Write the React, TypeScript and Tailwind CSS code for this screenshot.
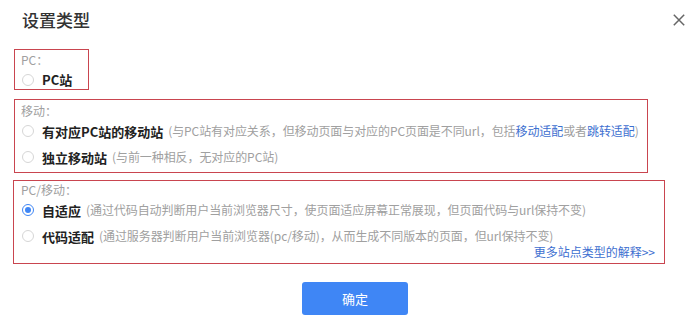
import React from "react";

function Radio({ checked = false }: { checked?: boolean }) {
  return (
    <span
      className={
        checked
          ? "ml-[1px] mr-[8px] flex h-[12px] w-[12px] shrink-0 items-center justify-center rounded-full border border-[#3f86f5] bg-white"
          : "ml-[1px] mr-[8px] flex h-[12px] w-[12px] shrink-0 items-center justify-center rounded-full border border-[#d6d6d6] bg-white"
      }
    >
      {checked && <span className="h-[6px] w-[6px] rounded-full bg-[#3f86f5]" />}
    </span>
  );
}

function Option({
  title,
  desc,
  checked,
  className,
}: {
  title: string;
  desc?: React.ReactNode;
  checked?: boolean;
  className: string;
}) {
  return (
    <div className={"flex items-center whitespace-nowrap " + className}>
      <Radio checked={checked} />
      <span className="text-[13px] font-bold leading-none text-[#222]">{title}</span>
      {desc && (
        <span className="ml-[5px] text-[12px] leading-none tracking-[-0.08px] text-[#a0a0a0]">{desc}</span>
      )}
    </div>
  );
}

export default function App() {
  return (
    <div className="h-[327px] w-[696px] overflow-hidden bg-white font-['Microsoft_YaHei','Noto_Sans_CJK_SC',sans-serif]">
      {/* header */}
      <div className="flex h-[39px] items-center justify-between pl-[22px] pr-[11px]">
        <div className="text-[17px] font-medium leading-none text-[#333]">设置类型</div>
        <svg width="12" height="12" viewBox="0 0 12 12" className="text-[#666]">
          <path d="M0.8 0.8 L11.2 11.2 M11.2 0.8 L0.8 11.2" stroke="currentColor" strokeWidth="1.5" />
        </svg>
      </div>

      {/* PC */}
      <div className="ml-[14px] mt-[10px] w-[75px] border border-[#c9454f] pl-[6px]">
        <div className="h-[20px] text-[12px] leading-[20px] text-[#a0a0a0]">PC：</div>
        <Option title="PC站" className="h-[19px]" />
      </div>

      {/* 移动 */}
      <div className="ml-[14px] mt-[9px] w-[634px] border border-[#c9454f] pb-[4px] pl-[6px] pt-[2px]">
        <div className="h-[18px] text-[12px] leading-[18px] text-[#a0a0a0]">移动：</div>
        <Option
          title="有对应PC站的移动站"
          className="h-[22px]"
          desc={
            <>
              (与PC站有对应关系，但移动页面与对应的PC页面是不同url，包括
              <span className="text-[#3d6fd0]">移动适配</span>或者
              <span className="text-[#3d6fd0]">跳转适配</span>)
            </>
          }
        />
        <Option title="独立移动站" className="mt-[4px] h-[22px]" desc="(与前一种相反，无对应的PC站)" />
      </div>

      {/* PC/移动 */}
      <div className="ml-[13px] mt-[7px] w-[652px] border border-[#c9454f] pb-[5px] pl-[7px] pr-[9px]">
        <div className="h-[18px] text-[12px] leading-[18px] text-[#a0a0a0]">PC/移动：</div>
        <Option
          checked
          title="自适应"
          className="h-[22px]"
          desc="(通过代码自动判断用户当前浏览器尺寸，使页面适应屏幕正常展现，但页面代码与url保持不变)"
        />
        <Option
          title="代码适配"
          className="mt-[5px] h-[20px]"
          desc="(通过服务器判断用户当前浏览器(pc/移动)，从而生成不同版本的页面，但url保持不变)"
        />
        <div className="h-[12px] text-right text-[12px] leading-[12px] text-[#3d6fd0]">更多站点类型的解释&gt;&gt;</div>
      </div>

      <button className="ml-[302px] mt-[18px] flex h-[33px] w-[106px] items-center justify-center rounded-[3px] bg-[#3f86f5] text-[13px] text-white">
        确定
      </button>
    </div>
  );
}
